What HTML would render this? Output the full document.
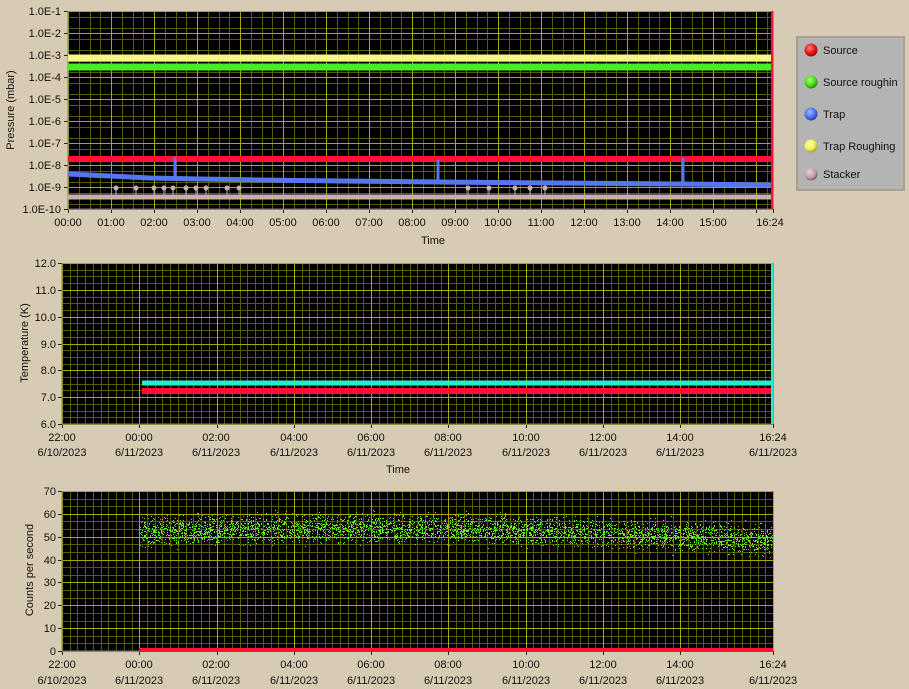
<!DOCTYPE html>
<html><head><meta charset="utf-8"><style>
html,body{margin:0;padding:0;background:#d8cbb4;width:909px;height:689px;overflow:hidden;font-family:"Liberation Sans",sans-serif;}
svg{position:absolute;left:0;top:0}
text{font-family:"Liberation Sans",sans-serif;font-size:11px;fill:#111}
</style></head><body>
<svg id="s" width="909" height="689" xmlns="http://www.w3.org/2000/svg">
<defs>
<radialGradient id="gr" cx="0.4" cy="0.35" r="0.7"><stop offset="0" stop-color="#ff8080"/><stop offset="0.6" stop-color="#e81010"/><stop offset="1" stop-color="#801010"/></radialGradient>
<radialGradient id="gg" cx="0.4" cy="0.35" r="0.7"><stop offset="0" stop-color="#a0ff80"/><stop offset="0.6" stop-color="#44dd11"/><stop offset="1" stop-color="#207010"/></radialGradient>
<radialGradient id="gb" cx="0.4" cy="0.35" r="0.7"><stop offset="0" stop-color="#a0b8ff"/><stop offset="0.6" stop-color="#4c70ee"/><stop offset="1" stop-color="#203890"/></radialGradient>
<radialGradient id="gy" cx="0.4" cy="0.35" r="0.7"><stop offset="0" stop-color="#ffffc0"/><stop offset="0.6" stop-color="#eeee50"/><stop offset="1" stop-color="#909020"/></radialGradient>
<radialGradient id="gp" cx="0.4" cy="0.35" r="0.7"><stop offset="0" stop-color="#e8d0e0"/><stop offset="0.6" stop-color="#c0a0b0"/><stop offset="1" stop-color="#705060"/></radialGradient>
</defs>
<g id="grid"></g>
<g text-anchor="end">
<text x="61" y="15">1.0E-1</text><text x="61" y="37">1.0E-2</text><text x="61" y="59">1.0E-3</text><text x="61" y="81">1.0E-4</text><text x="61" y="103">1.0E-5</text><text x="61" y="125">1.0E-6</text><text x="61" y="147">1.0E-7</text><text x="61" y="169">1.0E-8</text><text x="61" y="191">1.0E-9</text><text x="61" y="213">1.0E-10</text>
</g>
<g text-anchor="middle">
<text x="68" y="226">00:00</text><text x="111" y="226">01:00</text><text x="154" y="226">02:00</text><text x="197" y="226">03:00</text><text x="240" y="226">04:00</text><text x="283" y="226">05:00</text><text x="326" y="226">06:00</text><text x="369" y="226">07:00</text><text x="412" y="226">08:00</text><text x="455" y="226">09:00</text><text x="498" y="226">10:00</text><text x="541" y="226">11:00</text><text x="584" y="226">12:00</text><text x="627" y="226">13:00</text><text x="670" y="226">14:00</text><text x="713" y="226">15:00</text><text x="770" y="226">16:24</text>
<text x="433" y="244" font-size="12">Time</text>
</g>
<text transform="translate(14,110) rotate(-90)" text-anchor="middle">Pressure (mbar)</text>
<rect x="797" y="37" width="107" height="153" fill="#b4b4b4" stroke="#a9a090" stroke-width="2"/>
<g>
<circle cx="811" cy="50" r="6.5" fill="url(#gr)"/><text x="823" y="54">Source</text>
<circle cx="811" cy="82" r="6.5" fill="url(#gg)"/><text x="823" y="86">Source roughin</text>
<circle cx="811" cy="114" r="6.5" fill="url(#gb)"/><text x="823" y="118">Trap</text>
<circle cx="811" cy="146" r="6.5" fill="url(#gy)"/><text x="823" y="150">Trap Roughing</text>
<circle cx="811" cy="174" r="6.5" fill="url(#gp)"/><text x="823" y="178">Stacker</text>
</g>
<g text-anchor="end">
<text x="56" y="267">12.0</text><text x="56" y="294">11.0</text><text x="56" y="321">10.0</text><text x="56" y="348">9.0</text><text x="56" y="374">8.0</text><text x="56" y="401">7.0</text><text x="56" y="428">6.0</text>
</g>
<text transform="translate(28,343) rotate(-90)" text-anchor="middle">Temperature (K)</text>
<g text-anchor="middle">
<text x="62" y="441">22:00</text><text x="62" y="456">6/10/2023</text>
<text x="139" y="441">00:00</text><text x="139" y="456">6/11/2023</text>
<text x="216" y="441">02:00</text><text x="216" y="456">6/11/2023</text>
<text x="294" y="441">04:00</text><text x="294" y="456">6/11/2023</text>
<text x="371" y="441">06:00</text><text x="371" y="456">6/11/2023</text>
<text x="448" y="441">08:00</text><text x="448" y="456">6/11/2023</text>
<text x="526" y="441">10:00</text><text x="526" y="456">6/11/2023</text>
<text x="603" y="441">12:00</text><text x="603" y="456">6/11/2023</text>
<text x="680" y="441">14:00</text><text x="680" y="456">6/11/2023</text>
<text x="773" y="441">16:24</text><text x="773" y="456">6/11/2023</text>
<text x="398" y="473" font-size="12">Time</text>
</g>
<g text-anchor="end">
<text x="56" y="495">70</text><text x="56" y="518">60</text><text x="56" y="541">50</text><text x="56" y="564">40</text><text x="56" y="586">30</text><text x="56" y="609">20</text><text x="56" y="632">10</text><text x="56" y="655">0</text>
</g>
<text transform="translate(33,570) rotate(-90)" text-anchor="middle">Counts per second</text>
<g text-anchor="middle">
<text x="62" y="668">22:00</text><text x="62" y="684">6/10/2023</text>
<text x="139" y="668">00:00</text><text x="139" y="684">6/11/2023</text>
<text x="216" y="668">02:00</text><text x="216" y="684">6/11/2023</text>
<text x="294" y="668">04:00</text><text x="294" y="684">6/11/2023</text>
<text x="371" y="668">06:00</text><text x="371" y="684">6/11/2023</text>
<text x="448" y="668">08:00</text><text x="448" y="684">6/11/2023</text>
<text x="526" y="668">10:00</text><text x="526" y="684">6/11/2023</text>
<text x="603" y="668">12:00</text><text x="603" y="684">6/11/2023</text>
<text x="680" y="668">14:00</text><text x="680" y="684">6/11/2023</text>
<text x="773" y="668">16:24</text><text x="773" y="684">6/11/2023</text>
</g>
<g id="data"></g>
</svg>
<script>
var NS="http://www.w3.org/2000/svg",G=document.getElementById('grid'),D=document.getElementById('data');
function el(p,t,a){var e=document.createElementNS(NS,t);for(var k in a)e.setAttribute(k,a[k]);p.appendChild(e);return e;}
function L(p,x1,y1,x2,y2,c,w){el(p,'line',{x1:x1,y1:y1,x2:x2,y2:y2,stroke:c,'stroke-width':w||1});}
var MIN='#5a5a00',MAJ='#a8a800';
function plot(x0,y0,x1,y1,xs,ys){
 el(G,'rect',{x:x0,y:y0,width:x1-x0,height:y1-y0,fill:'#000'});
 xs.min.forEach(function(x){L(G,Math.round(x)+0.5,y0,Math.round(x)+0.5,y1,MIN);});
 ys.min.forEach(function(y){L(G,x0,Math.round(y)+0.5,x1,Math.round(y)+0.5,MIN);});
 xs.maj.forEach(function(x){x=Math.round(x)+0.5;L(G,x,y0,x,y1,MAJ);L(G,x,y1,x,y1+4,'#222');});
 ys.maj.forEach(function(y){y=Math.round(y)+0.5;L(G,x0,y,x1,y,MAJ);L(G,x0-4,y,x0,y,'#222');});
 L(G,x0,y0,x0,y1,'#777');L(G,x0,y1,x1,y1,'#777');
}
var a={min:[],maj:[]},b={min:[],maj:[]};
for(var h=0;h<=16.4;h+=0.25)a.min.push(68+h*43);
for(var h=0;h<=16;h++)a.maj.push(68+h*43);a.maj.push(773);
for(var d=0;d<18;d++)b.min.push(11+d*11+5.5);
for(var d=0;d<=9;d++)b.maj.push(11+d*22);
plot(68,11,773,209,a,b);
function xs2(){var o={min:[],maj:[]};for(var h=0;h<=18.4;h+=0.2)o.min.push(62+h*38.64);for(var h=0;h<=16;h+=2)o.maj.push(62+h*38.64);o.maj.push(773);return o;}
var c={min:[],maj:[]};for(var v=6;v<=12;v+=0.25)c.min.push(424-(v-6)*26.83);for(var v=6;v<=12;v++)c.maj.push(424-(v-6)*26.83);
plot(62,263,773,424,xs2(),c);
var e={min:[],maj:[]};for(var v=0;v<=70;v+=10/3)e.min.push(651-v*2.286);for(var v=0;v<=70;v+=10)e.maj.push(651-v*2.286);
plot(62,491,773,651,xs2(),e);
function band(p,x0,x1,y,h,c){el(p,'rect',{x:x0,y:y-h/2,width:x1-x0,height:h,fill:c});}
band(D,68,772,58,7,'#f6f680');
band(D,68,772,67,7,'#44ee22');
band(D,68,772,159,6,'#ff1133');
el(D,'polyline',{points:'68,174 110,176 150,178 200,179 260,180 340,181 440,182 560,183 680,184 772,185',fill:'none',stroke:'#5577ee','stroke-width':5});
L(D,175,157,175,178,'#5577ee',3);L(D,438,160,438,182,'#5577ee',3);L(D,683,158,683,184,'#5577ee',3);
band(D,68,772,197,5,'#c8b0a8');
[116,136,154,164,173,186,196,206,227,239,468,489,515,530,545].forEach(function(x){L(D,x,188,x,196,'#c8b0a8',1);el(D,'circle',{cx:x,cy:188,r:2.5,fill:'#c8b0a8'});});
L(D,772,11,772,209,'#ff1133',2);
band(D,142,772,383,5,'#22eecc');
band(D,142,772,391,6,'#ff1133');
L(D,772,263,772,424,'#22eecc',2);
var seed=1;function r(){seed=(seed*16807)%2147483647;return seed/2147483647;}
var pts='';
for(var i=0;i<4500;i++){var x=140+r()*632;var t=(x-140)/632;var mu=52.5+3*Math.sin(t*3.2)-4*t;var v=mu+(r()+r()+r()-1.5)*6;pts+='M'+Math.round(x)+' '+Math.round(651-v*2.286)+'h1v1h-1z';}
el(D,'path',{d:pts,fill:'#66ee22'});
band(D,139,773,650,4,'#ff1133');
</script>
</body></html>
